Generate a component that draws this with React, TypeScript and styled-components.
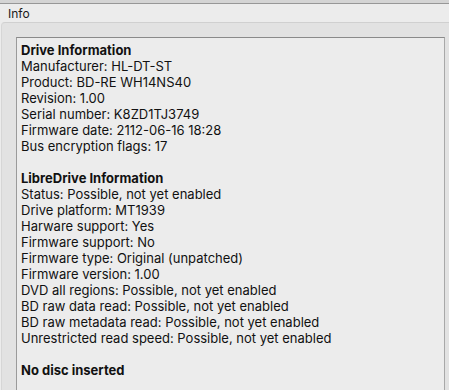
import React from "react";
import styled, { createGlobalStyle } from "styled-components";

const Global = createGlobalStyle`
  html, body { margin: 0; padding: 0; background: #ececec; overflow: hidden; }
  body { font-family: Inter, "Liberation Sans", Arial, sans-serif; color: #111; }
`;

const Window = styled.div`
  width: 449px;
  height: 390px;
  display: flex;
  flex-direction: column;
  background: #ececec;
  overflow: hidden;
`;

const TopStrip = styled.div`
  height: 3px;
  flex: none;
  background: #d4d4d4;
  border-bottom: 1px solid #979797;
`;

const TabLabel = styled.div`
  height: 18px;
  flex: none;
  padding: 1px 0 0 8px;
  box-sizing: border-box;
  font-size: 12px;
  line-height: 18px;
  color: #1a1a1a;
`;

const Group = styled.div`
  flex: 1;
  margin-left: 1px;
  display: flex;
  padding: 14px 4px 0 14px;
  background: #e2e2e2;
  border-top: 1px solid #d0d0d0;
  border-left: 1px solid #d6d6d6;
  border-top-left-radius: 4px;
`;

const Panel = styled.div`
  flex: 1;
  background: #ececec;
  border-top: 1px solid #8a8a8a;
  border-left: 1px solid #9a9a9a;
  border-right: 1px solid #a8a8a8;
  padding: 4px 0 0 4px;
  font-size: 13px;
  line-height: 16px;
`;

const Line = styled.div<{ $bold?: boolean }>`
  font-weight: ${(p) => (p.$bold ? 700 : 400)};
  white-space: nowrap;
  min-height: 16px;
`;

const drive = [
  "Manufacturer: HL-DT-ST",
  "Product: BD-RE WH14NS40",
  "Revision: 1.00",
  "Serial number: K8ZD1TJ3749",
  "Firmware date: 2112-06-16 18:28",
  "Bus encryption flags: 17",
];

const libre = [
  "Status: Possible, not yet enabled",
  "Drive platform: MT1939",
  "Harware support: Yes",
  "Firmware support: No",
  "Firmware type: Original (unpatched)",
  "Firmware version: 1.00",
  "DVD all regions: Possible, not yet enabled",
  "BD raw data read: Possible, not yet enabled",
  "BD raw metadata read: Possible, not yet enabled",
  "Unrestricted read speed: Possible, not yet enabled",
];

export default function App() {
  return (
    <Window>
      <Global />
      <TopStrip />
      <TabLabel>Info</TabLabel>
      <Group>
        <Panel>
          <Line $bold>Drive Information</Line>
          {drive.map((t) => (
            <Line key={t}>{t}</Line>
          ))}
          <Line />
          <Line $bold>LibreDrive Information</Line>
          {libre.map((t) => (
            <Line key={t}>{t}</Line>
          ))}
          <Line />
          <Line $bold>No disc inserted</Line>
        </Panel>
      </Group>
    </Window>
  );
}
